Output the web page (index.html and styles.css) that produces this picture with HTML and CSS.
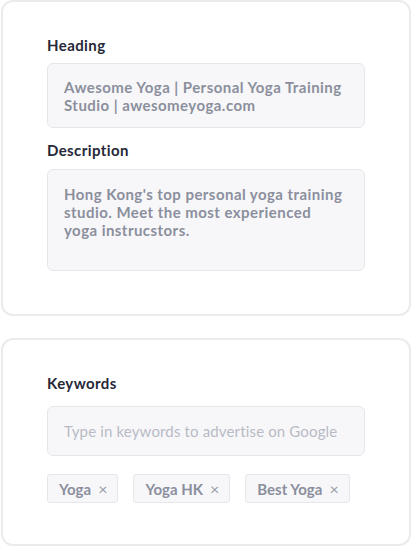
FILE: index.html
```html
<!DOCTYPE html>
<html lang="en">
<head>
    <meta charset="UTF-8">
    <title>Search Listing</title>
    <link rel="stylesheet" href="styles.css">
</head>
<body>
<div class="card">
    <label class="field-label">Heading</label>
    <div class="field field-heading">Awesome Yoga | Personal Yoga Training Studio | awesomeyoga.com</div>

    <label class="field-label label-desc">Description</label>
    <div class="field field-desc">Hong Kong's top personal yoga training studio. Meet the most experienced yoga instrucstors.</div>
</div>

<div class="card card-keywords">
    <label class="field-label" for="keyword">Keywords</label>
    <input id="keyword" class="keyword-input" type="text" placeholder="Type in keywords to advertise on Google">

    <div class="tags">
        <span class="tag">Yoga <span class="tag-x">&times;</span></span>
        <span class="tag">Yoga HK <span class="tag-x">&times;</span></span>
        <span class="tag">Best Yoga <span class="tag-x">&times;</span></span>
    </div>
</div>
</body>
</html>
```

FILE: styles.css
```css
body {
    margin: 0;
    padding: 0 1px;
    background: #fff;
    font-family: Lato, "Open Sans", sans-serif;
}

.card {
    border: 2px solid #ebebed;
    border-radius: 12px;
    padding: 33px 44px 43px;
    height: 316px;
    box-sizing: border-box;
}

.card-keywords {
    margin-top: 22px;
    height: 208px;
    padding-bottom: 40px;
}

.field-label {
    display: block;
    font-size: 15px;
    line-height: 20px;
    font-weight: 700;
    letter-spacing: 0.4px;
    color: #262838;
    margin-bottom: 8px;
}

.label-desc {
    margin-top: 12px;
    margin-bottom: 9px;
}

.card-keywords .field-label {
    margin-bottom: 13px;
}

.field {
    background: #f7f7f9;
    border: 1px solid #e7e7eb;
    border-radius: 6px;
    padding: 14px 16px;
    box-sizing: border-box;
    font-size: 15px;
    line-height: 18px;
    font-weight: 700;
    letter-spacing: 0.45px;
    color: #8b8f9d;
}

.field-heading {
    height: 65px;
}

.field-desc {
    height: 102px;
    padding-top: 15px;
}

.keyword-input {
    display: block;
    width: 100%;
    height: 50px;
    box-sizing: border-box;
    background: #f7f7f9;
    border: 1px solid #e7e7eb;
    border-radius: 6px;
    padding: 0 16px;
    font-family: Lato, sans-serif;
    font-size: 15px;
    letter-spacing: 0.15px;
    color: #8b8f9d;
    outline: none;
}

.keyword-input::placeholder {
    color: #b8bbc5;
}

.tags {
    display: flex;
    gap: 15px;
    margin-top: 18px;
}

.tag {
    display: flex;
    align-items: center;
    gap: 7px;
    height: 29px;
    box-sizing: border-box;
    padding: 0 10px 0 11px;
    background: #f7f7f9;
    border: 1px solid #e7e7eb;
    border-radius: 3px;
    font-size: 15px;
    font-weight: 700;
    color: #8b8f9d;
}

.tag-x {
    font-weight: 400;
    font-size: 16px;
    color: #9a9ea9;
}
```
